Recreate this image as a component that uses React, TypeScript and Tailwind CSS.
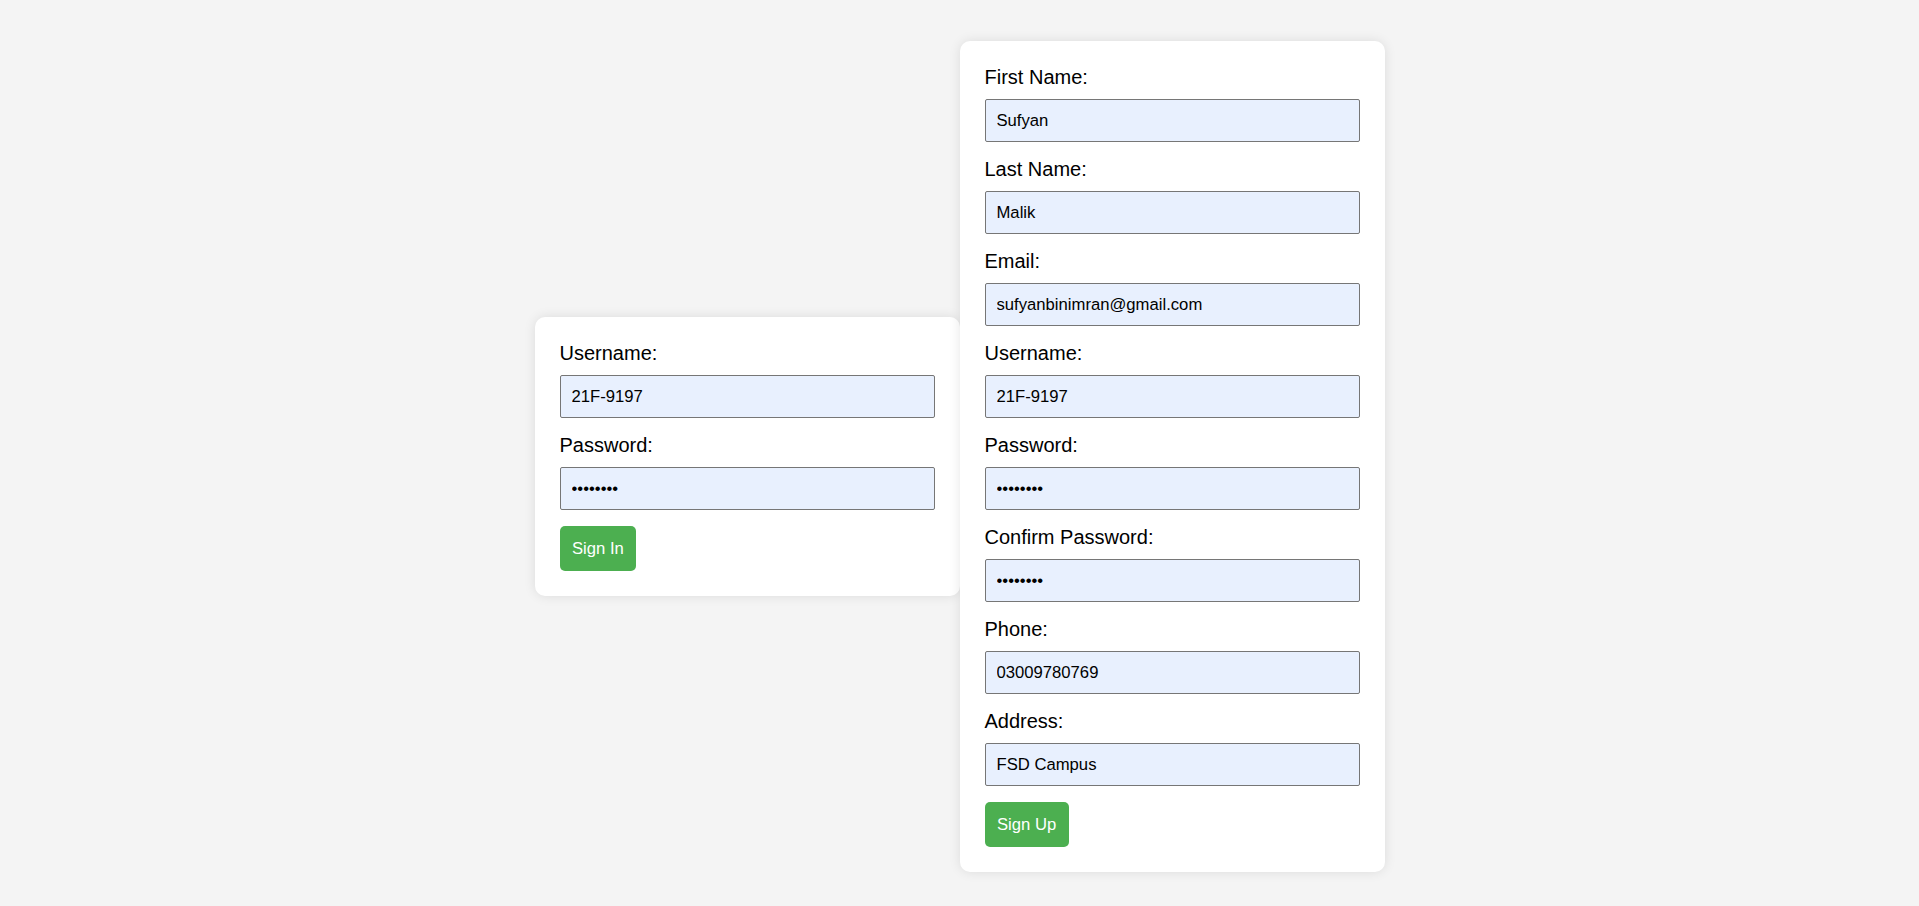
import React from "react";

type Field = { label: string; value: string; type?: string };

function FieldRow({ label, value, type = "text" }: Field) {
  return (
    <div className="mb-[16px]">
      <label className="block text-[20px] leading-[23px] mb-[10px] text-black">{label}</label>
      <input
        type={type}
        readOnly
        defaultValue={value}
        className="block w-full h-[43px] pl-[11px] pr-[10px] bg-[#e8f0fe] border border-[#767676] rounded-[2px] text-[16.67px] text-black outline-none"
        style={{ fontFamily: '"Liberation Sans", Arial, sans-serif' }}
      />
    </div>
  );
}

function Card({ fields, button }: { fields: Field[]; button: string }) {
  return (
    <div className="w-[425px] bg-white rounded-[10px] p-[25px] shadow-[0_0_12px_rgba(0,0,0,0.1)]">
      {fields.map((f) => (
        <FieldRow key={f.label} {...f} />
      ))}
      <button className="h-[45px] px-[12.5px] bg-[#4caf50] text-white text-[16.67px] leading-[20px] rounded-[5px]">
        {button}
      </button>
    </div>
  );
}

export default function App() {
  return (
    <div
      className="h-[906px] pt-[7px] bg-[#f4f4f4] flex items-center justify-center overflow-hidden"
      style={{ fontFamily: '"Liberation Sans", Arial, sans-serif' }}
    >
      <Card
        fields={[
          { label: "Username:", value: "21F-9197" },
          { label: "Password:", value: "12345678", type: "password" },
        ]}
        button="Sign In"
      />
      <Card
        fields={[
          { label: "First Name:", value: "Sufyan" },
          { label: "Last Name:", value: "Malik" },
          { label: "Email:", value: "sufyanbinimran@gmail.com" },
          { label: "Username:", value: "21F-9197" },
          { label: "Password:", value: "12345678", type: "password" },
          { label: "Confirm Password:", value: "12345678", type: "password" },
          { label: "Phone:", value: "03009780769" },
          { label: "Address:", value: "FSD Campus" },
        ]}
        button="Sign Up"
      />
    </div>
  );
}
